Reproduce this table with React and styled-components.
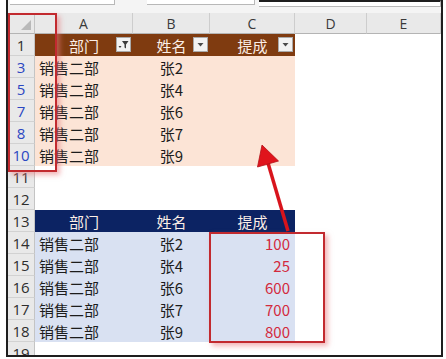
import styled, { createGlobalStyle } from "styled-components";

const GlobalStyle = createGlobalStyle`
  html, body { margin: 0; padding: 0; background: #fff; }
  body { font-family: "Noto Sans CJK SC", "Noto Sans", sans-serif; }
`;

const COLS = [27, 98, 77, 85, 72, 74];
const LETTERS = ["A", "B", "C", "D", "E"];

const ROWS = [
  { n: 1, kind: "h1", cells: ["部门", "姓名", "提成"] },
  { n: 3, kind: "d1", blue: true, cells: ["销售二部", "张2", ""] },
  { n: 5, kind: "d1", blue: true, cells: ["销售二部", "张4", ""] },
  { n: 7, kind: "d1", blue: true, cells: ["销售二部", "张6", ""] },
  { n: 8, kind: "d1", blue: true, cells: ["销售二部", "张7", ""] },
  { n: 10, kind: "d1", blue: true, cells: ["销售二部", "张9", ""] },
  { n: 11 },
  { n: 12 },
  { n: 13, kind: "h2", cells: ["部门", "姓名", "提成"] },
  { n: 14, kind: "d2", cells: ["销售二部", "张2", "100"] },
  { n: 15, kind: "d2", cells: ["销售二部", "张4", "25"] },
  { n: 16, kind: "d2", cells: ["销售二部", "张6", "600"] },
  { n: 17, kind: "d2", cells: ["销售二部", "张7", "700"] },
  { n: 18, kind: "d2", cells: ["销售二部", "张9", "800"] },
  { n: 19 },
];

const FILL = { h1: "#7f3b10", d1: "#fce4d6", h2: "#0c2363", d2: "#d9e1f2" };

const Page = styled.div`
  position: relative;
  width: 446px;
  height: 359px;
  background: #fff;
  overflow: hidden;
`;

const Frame = styled.div`
  margin-left: 6px;
  width: 433px;
  height: 355px;
  border-left: 2px solid #1e1e1e;
  border-right: 2px solid #1e1e1e;
  border-bottom: 2px solid #1e1e1e;
  display: flex;
  flex-direction: column;
  overflow: hidden;
`;

const TopStrip = styled.div`
  height: 13px;
  flex: none;
  display: flex;
  align-items: flex-start;
  background: #f4f4f4;
`;

const TopBox = styled.div`
  height: 4px;
  width: ${(p) => p.$w}px;
  margin-left: ${(p) => p.$ml || 0}px;
  background: #fff;
  border-bottom: 1px solid #b8b8b8;
  border-right: 1px solid #b8b8b8;
  border-top: ${(p) => (p.$dark ? "2px solid #1e1e1e" : "none")};
`;

const Sheet = styled.div`
  flex: 1;
  display: grid;
  grid-template-columns: ${COLS.map((c) => c + "px").join(" ")};
  grid-template-rows: 21px;
  grid-auto-rows: 22px;
  overflow: hidden;
`;

const Corner = styled.div`
  position: relative;
  background: #e9e9e9;
  border-right: 1px solid #c4c4c4;
  border-bottom: 1px solid #b4b4b4;
  box-sizing: border-box;
`;

const CornerMark = styled.div`
  position: absolute;
  right: 3px;
  bottom: 3px;
  width: 0;
  height: 0;
  border-left: 10px solid transparent;
  border-bottom: 10px solid #b9b9b9;
`;

const ColHead = styled.div`
  background: #e9e9e9;
  border-right: 1px solid #cdcdcd;
  border-bottom: 1px solid #b4b4b4;
  box-sizing: border-box;
  display: flex;
  align-items: center;
  justify-content: center;
  font-family: "Open Sans", "Noto Sans", sans-serif;
  font-size: 14px;
  color: #3a3a3a;
`;

const RowHead = styled.div`
  background: #e9e9e9;
  border-right: 1px solid #c4c4c4;
  border-bottom: 1px solid #d2d2d2;
  box-sizing: border-box;
  display: flex;
  align-items: center;
  justify-content: center;
  font-family: "Open Sans", "Noto Sans", sans-serif;
  font-size: 15px;
  color: ${(p) => (p.$blue ? "#2b47c2" : "#2e2e2e")};
`;

const Cell = styled.div`
  position: relative;
  background: ${(p) => p.$bg || "#fff"};
  display: flex;
  align-items: center;
  justify-content: ${(p) => p.$justify || "flex-start"};
  padding: 0 ${(p) => (p.$justify === "flex-end" ? 5 : 4)}px;
  box-sizing: border-box;
  font-family: "Noto Sans CJK SC", "Noto Sans", sans-serif;
  font-size: 15px;
  line-height: 1;
  white-space: nowrap;
  color: ${(p) => p.$color || "#1c1c1c"};
`;

const FilterBtn = styled.div`
  position: absolute;
  right: 2px;
  top: 3px;
  width: 15px;
  height: 15px;
  box-sizing: border-box;
  background: #f2f2f2;
  border: 1px solid #a9a9a9;
  display: flex;
  align-items: center;
  justify-content: center;
`;

const Mark = styled.div`
  position: absolute;
  border: 2px solid #c22a2f;
  box-shadow: 3px 3px 5px rgba(232, 120, 125, 0.55);
  box-sizing: border-box;
  pointer-events: none;
  left: ${(p) => p.$x}px;
  top: ${(p) => p.$y}px;
  width: ${(p) => p.$w}px;
  height: ${(p) => p.$h}px;
`;

const ArrowLayer = styled.svg`
  position: absolute;
  left: 0;
  top: 0;
  pointer-events: none;
`;

const DropIcon = ({ filtered }) =>
  filtered ? (
    <svg width="11" height="11" viewBox="0 0 11 11">
      <path d="M0.5 7 L3.5 7 L2 9 Z" fill="#3c3c3c" />
      <path d="M4 2 L10.5 2 L8 5.5 L8 9.5 L6.5 8.5 L6.5 5.5 Z" fill="#3c3c3c" />
    </svg>
  ) : (
    <svg width="9" height="9" viewBox="0 0 9 9">
      <path d="M1.5 3 L7.5 3 L4.5 6.5 Z" fill="#4a4a4a" />
    </svg>
  );

const colJustify = (kind, i) => {
  if (kind === "h1" || kind === "h2") return "center";
  if (i === 1) return "center";
  if (i === 2) return "flex-end";
  return "flex-start";
};

const SheetRow = ({ row }) => {
  const { kind, cells = [] } = row;
  const head = kind === "h1" || kind === "h2";
  return (
    <>
      <RowHead $blue={row.blue}>{row.n}</RowHead>
      {LETTERS.map((l, i) => {
        const inTable = kind && i < 3;
        return (
          <Cell
            key={l}
            $bg={inTable ? FILL[kind] : undefined}
            $justify={colJustify(kind, i)}
            $color={head ? "#fbeee6" : kind === "d2" && i === 2 ? "#d3293d" : undefined}
          >
            {inTable ? cells[i] : null}
            {kind === "h1" && i < 3 && (
              <FilterBtn>
                <DropIcon filtered={i === 0} />
              </FilterBtn>
            )}
          </Cell>
        );
      })}
    </>
  );
};

export default function App() {
  return (
    <>
      <GlobalStyle />
      <Page>
        <Frame>
          <TopStrip>
            <TopBox $w={105} $ml={2} />
            <TopBox $w={108} $ml={32} />
            <TopBox $w={182} $ml={4} $dark />
          </TopStrip>
          <Sheet>
            <Corner>
              <CornerMark />
            </Corner>
            {LETTERS.map((l) => (
              <ColHead key={l}>{l}</ColHead>
            ))}
            {ROWS.map((r) => (
              <SheetRow key={r.n} row={r} />
            ))}
          </Sheet>
        </Frame>

        <Mark $x={8} $y={13} $w={49} $h={159} />
        <Mark $x={209} $y={232} $w={116} $h={111} />

        <ArrowLayer width="446" height="359" viewBox="0 0 446 359">
          <line x1="288" y1="231" x2="268" y2="163" stroke="#d8141c" strokeWidth="3.5" />
          <path d="M262 145 L278.5 161 L257.5 167 Z" fill="#e0141c" stroke="#b31016" strokeWidth="0.8" />
        </ArrowLayer>
      </Page>
    </>
  );
}
